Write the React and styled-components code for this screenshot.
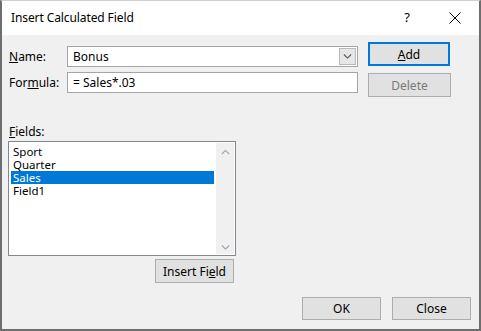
import React from 'react'
import styled, { createGlobalStyle } from 'styled-components'

const Global = createGlobalStyle`
  html, body { margin: 0; padding: 0; background: #ffffff; }
  body { font-family: "Noto Sans", "Liberation Sans", sans-serif; font-size: 12px; color: #000; }
`

const Window = styled.div`
  width: 481px;
  height: 331px;
  box-sizing: border-box;
  border: 2px solid #6e6e6e;
  border-top: 1px solid #d0d0d0;
  background: #f0f0f0;
  display: flex;
  flex-direction: column;
`

const TitleBar = styled.div`
  height: 34px;
  background: #ffffff;
  display: flex;
  align-items: center;
  padding-left: 9px;
`

const Title = styled.div`
  flex: 1;
  font-size: 12px;
  letter-spacing: -0.1px;
  padding-bottom: 2px;
`

const Help = styled.div`
  width: 46px;
  text-align: center;
  font-size: 13px;
  margin-right: 2px;
  padding-bottom: 2px;
`

const CloseX = styled.div`
  width: 46px;
  display: flex;
  justify-content: center;
  margin-right: 1px;
`

const Body = styled.div`
  flex: 1;
  display: flex;
  flex-direction: column;
  padding: 7px 8px 9px 6px;
`

const Top = styled.div`
  display: flex;
  gap: 10px;
`

const FormCol = styled.div`
  display: flex;
  flex-direction: column;
  gap: 5px;
  padding-top: 4px;
`

const FormRow = styled.div`
  display: flex;
  align-items: center;
`

const Label = styled.label`
  width: 59px;
  box-sizing: border-box;
  padding-left: 1px;
  font-size: 12px;
`

const Input = styled.div`
  width: 291px;
  height: 21px;
  box-sizing: border-box;
  background: #fff;
  border: 1px solid #a5a5a5;
  display: flex;
  align-items: center;
  padding-left: 5px;
  font-size: 12px;
`

const Value = styled.span`
  flex: 1;
`

const DropBtn = styled.div`
  width: 17px;
  align-self: stretch;
  box-sizing: border-box;
  margin: 1px;
  background: #e6e6e6;
  border: 1px solid #b9b9b9;
  display: flex;
  align-items: center;
  justify-content: center;
`

const BtnCol = styled.div`
  display: flex;
  flex-direction: column;
  gap: 7px;
`

const Button = styled.div`
  width: ${p => p.w || 79}px;
  height: ${p => p.h || 23}px;
  box-sizing: border-box;
  background: #e1e1e1;
  border: ${p => (p.primary ? '2px solid #0078d7' : '1px solid #adadad')};
  color: ${p => (p.disabled ? '#7a7a7a' : '#000')};
  display: flex;
  align-items: center;
  justify-content: center;
  font-size: 12px;
`

const FieldsLabel = styled.div`
  margin-top: 26px;
  margin-left: 1px;
  height: 18px;
`

const ListBox = styled.div`
  width: 228px;
  height: 115px;
  box-sizing: border-box;
  background: #fff;
  border: 1px solid #828790;
  display: flex;
  padding: 3px 1px 1px 2px;
`

const Items = styled.div`
  flex: 1;
  display: flex;
  flex-direction: column;
  margin-right: 2px;
`

const Item = styled.div`
  height: 13px;
  line-height: 13px;
  font-size: 11.5px;
  padding-left: 2px;
  overflow: hidden;
  background: ${p => (p.selected ? '#0078d7' : 'transparent')};
  color: ${p => (p.selected ? '#fff' : '#000')};
`

const ScrollBar = styled.div`
  width: 18px;
  margin: -2px 0 0;
  background: #f0f0f0;
  display: flex;
  flex-direction: column;
  justify-content: space-between;
  align-items: center;
  padding: 6px 0 4px;
`

const InsertRow = styled.div`
  width: 226px;
  display: flex;
  justify-content: flex-end;
  margin-top: 3px;
`

const Footer = styled.div`
  margin-top: auto;
  display: flex;
  justify-content: flex-end;
  gap: 11px;
`

const Chevron = ({ up, color = '#a0a0a0', size = 9 }) => (
  <svg width={size} height={size / 2 + 1} viewBox="0 0 10 6">
    <path d={up ? 'M1 5.5 L5 1.5 L9 5.5' : 'M1 0.5 L5 4.5 L9 0.5'} fill="none" stroke={color} strokeWidth="1.2" />
  </svg>
)

export default function App() {
  const fields = ['Sport', 'Quarter', 'Sales', 'Field1']
  return (
    <>
      <Global />
      <Window>
        <TitleBar>
          <Title>Insert Calculated Field</Title>
          <Help>?</Help>
          <CloseX>
            <svg width="12" height="12" viewBox="0 0 12 12">
              <path d="M0.5 0.5 L11.5 11.5 M11.5 0.5 L0.5 11.5" stroke="#000" strokeWidth="1" />
            </svg>
          </CloseX>
        </TitleBar>
        <Body>
          <Top>
            <FormCol>
              <FormRow>
                <Label><u>N</u>ame:</Label>
                <Input>
                  <Value>Bonus</Value>
                  <DropBtn><Chevron color="#555" size={9} /></DropBtn>
                </Input>
              </FormRow>
              <FormRow>
                <Label>For<u>m</u>ula:</Label>
                <Input>= Sales*.03</Input>
              </FormRow>
            </FormCol>
            <BtnCol>
              <Button primary w={82} h={24}><u>A</u>dd</Button>
              <Button disabled w={83} h={24}>Delete</Button>
            </BtnCol>
          </Top>
          <FieldsLabel><u>F</u>ields:</FieldsLabel>
          <ListBox>
            <Items>
              {fields.map(f => (
                <Item key={f} selected={f === 'Sales'}>{f}</Item>
              ))}
            </Items>
            <ScrollBar>
              <Chevron up />
              <Chevron />
            </ScrollBar>
          </ListBox>
          <InsertRow>
            <Button w={79} h={24}>Insert Fi<u>e</u>ld</Button>
          </InsertRow>
          <Footer>
            <Button>OK</Button>
            <Button>Close</Button>
          </Footer>
        </Body>
      </Window>
    </>
  )
}
